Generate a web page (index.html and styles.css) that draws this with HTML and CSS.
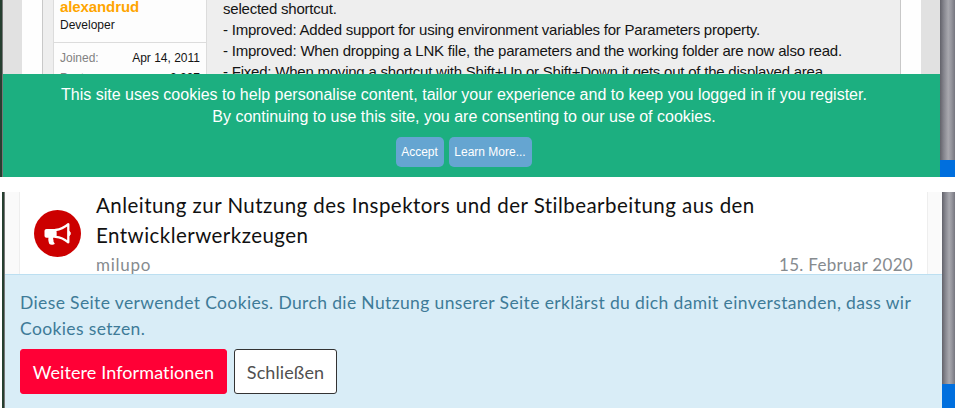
FILE: index.html
```html
<!DOCTYPE html>
<html lang="de">

<head>
    <meta charset="UTF-8">
    <meta name="viewport" content="width=device-width, initial-scale=1.0">
    <title>Cookies</title>
    <link rel="stylesheet" href="styles.css">
</head>

<body>

    <!-- forum -->
    <div class="window forum">
        <div class="page">
            <div class="content">
                <div class="post">
                    <div class="user">
                        <div class="userHead">
                            <div class="name">alexandrud</div>
                            <div class="role">Developer</div>
                        </div>
                        <dl>
                            <dt>Joined:</dt>
                            <dd>Apr 14, 2011</dd>
                        </dl>
                        <dl class="second">
                            <dt>Posts:</dt>
                            <dd>2,297</dd>
                        </dl>
                    </div>
                    <div class="message">
                        <p>selected shortcut.</p>
                        <p>- Improved: Added support for using environment variables for Parameters property.</p>
                        <p>- Improved: When dropping a LNK file, the parameters and the working folder are now also read.</p>
                        <p>- Fixed: When moving a shortcut with Shift+Up or Shift+Down it gets out of the displayed area.</p>
                    </div>
                </div>
            </div>
            <div class="notice">
                <p>This site uses cookies to help personalise content, tailor your experience and to keep you logged in if you register.</p>
                <p>By continuing to use this site, you are consenting to our use of cookies.</p>
                <div class="buttons">
                    <a class="accept">Accept</a>
                    <a class="more">Learn More...</a>
                </div>
            </div>
        </div>
        <div class="scroll"></div>
    </div>

    <!-- blog -->
    <div class="window blog">
        <div class="page">
            <div class="article">
                <svg class="icon" viewBox="0 0 47 47">
                    <circle cx="23.5" cy="23.5" r="23.5" fill="#cc0000" />
                    <path d="M12.5 19H22v8.7h-2.8c-.4 1.6.6 2.2.3 3.3-.2 1.1.8 1.7 1.3 2.4-1 1.8-4.3 1.8-5.4.6-.8-2.3-1.5-4.3-.9-6.3h-2c-1.1 0-2-.9-2-2V21c0-1.1.9-2 2-2z" fill="#fff" />
                    <path d="M21.5 20c5-.4 9-2.4 12.8-5.8v18.1c-3.8-3.3-7.8-5.1-12.8-5.5z" fill="none" stroke="#fff" stroke-width="2.3" stroke-linejoin="round" />
                    <path d="M34.5 21c2.4.3 2.4 4.6 0 5z" fill="#fff" stroke="#fff" />
                </svg>
                <div class="info">
                    <h2>Anleitung zur Nutzung des Inspektors und der Stilbearbeitung aus den<br>Entwicklerwerkzeugen</h2>
                    <div class="meta">
                        <span class="author">milupo</span>
                        <span class="date">15. Februar 2020</span>
                    </div>
                </div>
            </div>
            <div class="cookie">
                <p>Diese Seite verwendet Cookies. Durch die Nutzung unserer Seite erklärst du dich damit einverstanden, dass wir<br>Cookies setzen.</p>
                <div class="actions">
                    <a class="btn red">Weitere Informationen</a>
                    <a class="btn">Schließen</a>
                </div>
            </div>
        </div>
        <div class="scroll"></div>
    </div>

</body>

</html>
```
FILE: styles.css
```css
* {
    box-sizing: border-box;
}

body {
    margin: 0;
    height: 408px;
    overflow: hidden;
    background: #fff;
    font-family: "Liberation Sans", Arial, sans-serif;
    display: flex;
    flex-flow: column;
    gap: 15px;
}

p, h2, dl, dd {
    margin: 0;
    white-space: nowrap;
}

.window {
    display: flex;
    overflow: hidden;
}

.page {
    flex: 1;
    min-width: 0;
    display: flex;
    flex-flow: column;
}

/* scrollbar, blue below the track */
.scroll {
    width: 15px;
    background: linear-gradient(to right, #62626a, #85858d 25%, #a8a8ae 55%, #96969e 75%, #76767f);
    border-bottom: 17px solid #006fde;
}

/* forum */
.forum {
    height: 177px;
    border-left: 2px solid #263f30;
}

.forum .page {
    border-left: 1px solid #777;
}

.content {
    height: 74px;
    overflow: hidden;
    background: #e1e1e1;
    padding: 0 19px;
}

.post {
    height: 74px;
    border: solid #fefefe;
    border-width: 0 20px;
    background: #eee;
    display: flex;
    box-shadow: inset 1px 0 #c8c8c8, inset -1px 0 #c8c8c8;
    padding-left: 11px;
}

.user {
    width: 154px;
    border: solid #dcdcdc;
    border-width: 0 1px;
    background: #fdfdfd;
    font-size: 12px;
    line-height: 16px;
    color: #141414;
}

.userHead {
    display: flow-root;
    height: 43px;
    border-bottom: 1px solid #dcdcdc;
    padding-left: 6px;
}

.name {
    margin-top: -3px;
    font-size: 15px;
    line-height: 20px;
    font-weight: bold;
    letter-spacing: -0.1px;
    color: #ffa500;
}

.user dl {
    display: flex;
    justify-content: space-between;
    padding: 7px 6px 0;
}

.user dl.second {
    padding-top: 4px;
}

.user dt {
    color: #828282;
}

.message {
    padding-left: 16px;
    font-size: 15px;
    line-height: 21px;
    letter-spacing: -0.22px;
    color: #141414;
}

.message p:first-child {
    margin-top: -2px;
}

.notice {
    flex: 1;
    background: #1caf80;
    color: #fff;
    font-size: 16px;
    line-height: 22px;
    padding-top: 10px;
    padding-right: 15px;
    text-align: center;
}

.buttons {
    display: flex;
    justify-content: center;
    gap: 5px;
    padding-top: 9px;
    margin-right: 1px;
    font-size: 12px;
    line-height: 30px;
}

.buttons a {
    width: 48px;
    height: 30px;
    border-radius: 5px;
    background: #65a5d1;
}

.buttons .more {
    width: 83px;
}

/* blog */
.blog {
    height: 216px;
    margin-left: 2px;
    border-left: 2px solid #263f30;
    font-family: Lato, sans-serif;
}

.blog .page {
    border-left: 1px solid #777;
}

.blog .scroll {
    width: 13px;
    border-bottom-width: 24px;
}

.article {
    height: 82px;
    border: solid #fafafa;
    border-width: 0 14px;
    box-shadow: inset 1px 0 #eee, inset -1px 0 #eee;
    padding: 0 15px;
    display: flex;
    gap: 15px;
}

.icon {
    width: 47px;
    height: 47px;
    margin-top: 18px;
}

.info {
    flex: 1;
    min-width: 0;
}

h2 {
    margin: -2px 0 2px;
    font-size: 20.5px;
    font-weight: 400;
    line-height: 30px;
    letter-spacing: 0.46px;
    color: #111;
}

.meta {
    display: flex;
    justify-content: space-between;
    font-size: 17px;
    line-height: 26px;
    letter-spacing: 0.3px;
    color: #868b8f;
}

.author {
    letter-spacing: 0.75px;
}

.cookie {
    flex: 1;
    border-top: 1px solid #bcdff1;
    background: #d9edf7;
    padding: 15px;
    font-size: 17.5px;
    line-height: 26px;
    letter-spacing: 0.37px;
    color: #3e7b98;
}

.actions {
    display: flex;
    gap: 7px;
    padding-top: 7px;
}

.btn {
    width: 103px;
    height: 45px;
    border: 1px solid #333;
    border-radius: 3px;
    background: #fff;
    color: #505050;
    font-size: 18px;
    line-height: 45px;
    letter-spacing: 0.1px;
    text-align: center;
    white-space: nowrap;
}

.btn.red {
    width: 207px;
    background: #ff0036;
    border-color: #ff0036;
    color: #fff;
}
```
